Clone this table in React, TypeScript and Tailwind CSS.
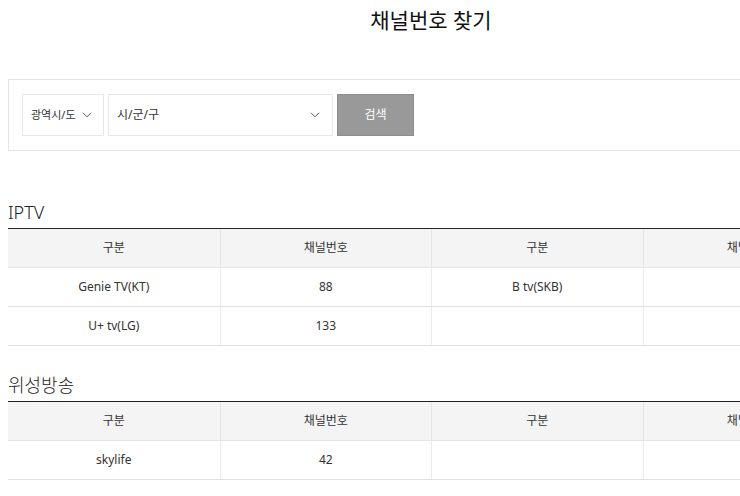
import React from "react";

const font = { fontFamily: '"Noto Sans", "Noto Sans CJK KR", sans-serif' };

function Chevron() {
  return (
    <svg width="10" height="6" viewBox="0 0 10 6" fill="none" stroke="#555" strokeWidth="1">
      <path d="M1 0.8 L5 4.8 L9 0.8" />
    </svg>
  );
}

function Table({ rows }: { rows: string[][] }) {
  return (
    <div className="border-t border-[#222]">
      <div className="grid grid-cols-4 bg-[#f4f4f4] border-b border-[#e6e6e6] h-[39px] text-[12px] text-[#333]">
        {["구분", "채널번호", "구분", "채널번호"].map((h, i) => (
          <div key={i} className={"flex items-center justify-center " + (i > 0 ? "border-l border-[#e6e6e6]" : "")}>
            {h}
          </div>
        ))}
      </div>
      {rows.map((r, ri) => (
        <div key={ri} className="grid grid-cols-4 border-b border-[#e0e0e0] h-[39px] text-[12px] text-[#333]">
          {r.map((c, i) => (
            <div key={i} className={"flex items-center justify-center " + (i > 0 ? "border-l border-[#ececec]" : "")}>
              {c}
            </div>
          ))}
        </div>
      ))}
    </div>
  );
}

export default function App() {
  return (
    <div className="w-[740px] h-[496px] overflow-hidden bg-white" style={font}>
      <div className="ml-[8px] w-[846px]">
        <h1 className="text-center text-[21px] text-[#111] pt-[5px] leading-[30px]">채널번호 찾기</h1>
        <div className="mt-[44px] border border-[#e6e6e6] h-[72px] pl-[13px] pt-[14px] flex gap-[4px]">
          <div className="w-[82px] h-[42px] border border-[#e8e8e8] flex items-center justify-between pl-[8px] pr-[11px] text-[11px] text-[#333]">
            <span>광역시/도</span>
            <Chevron />
          </div>
          <div className="w-[225px] h-[42px] border border-[#e8e8e8] flex items-center justify-between pl-[8px] pr-[12px] text-[12px] text-[#333]">
            <span>시/군/구</span>
            <Chevron />
          </div>
          <div className="w-[77px] h-[42px] bg-[#999999] border border-[#8e8e8e] flex items-center justify-center text-[12px] text-white">
            검색
          </div>
        </div>
        <h2 className="mt-[48px] text-[18px] leading-[26px] text-[#222] font-light">IPTV</h2>
        <div className="mt-[3px]">
          <Table rows={[["Genie TV(KT)", "88", "B tv(SKB)", ""], ["U+ tv(LG)", "133", "", ""]]} />
        </div>
        <h2 className="mt-[26px] text-[18px] leading-[26px] text-[#222] font-light">위성방송</h2>
        <div className="mt-[3px]">
          <Table rows={[["skylife", "42", "", ""]]} />
        </div>
      </div>
    </div>
  );
}
